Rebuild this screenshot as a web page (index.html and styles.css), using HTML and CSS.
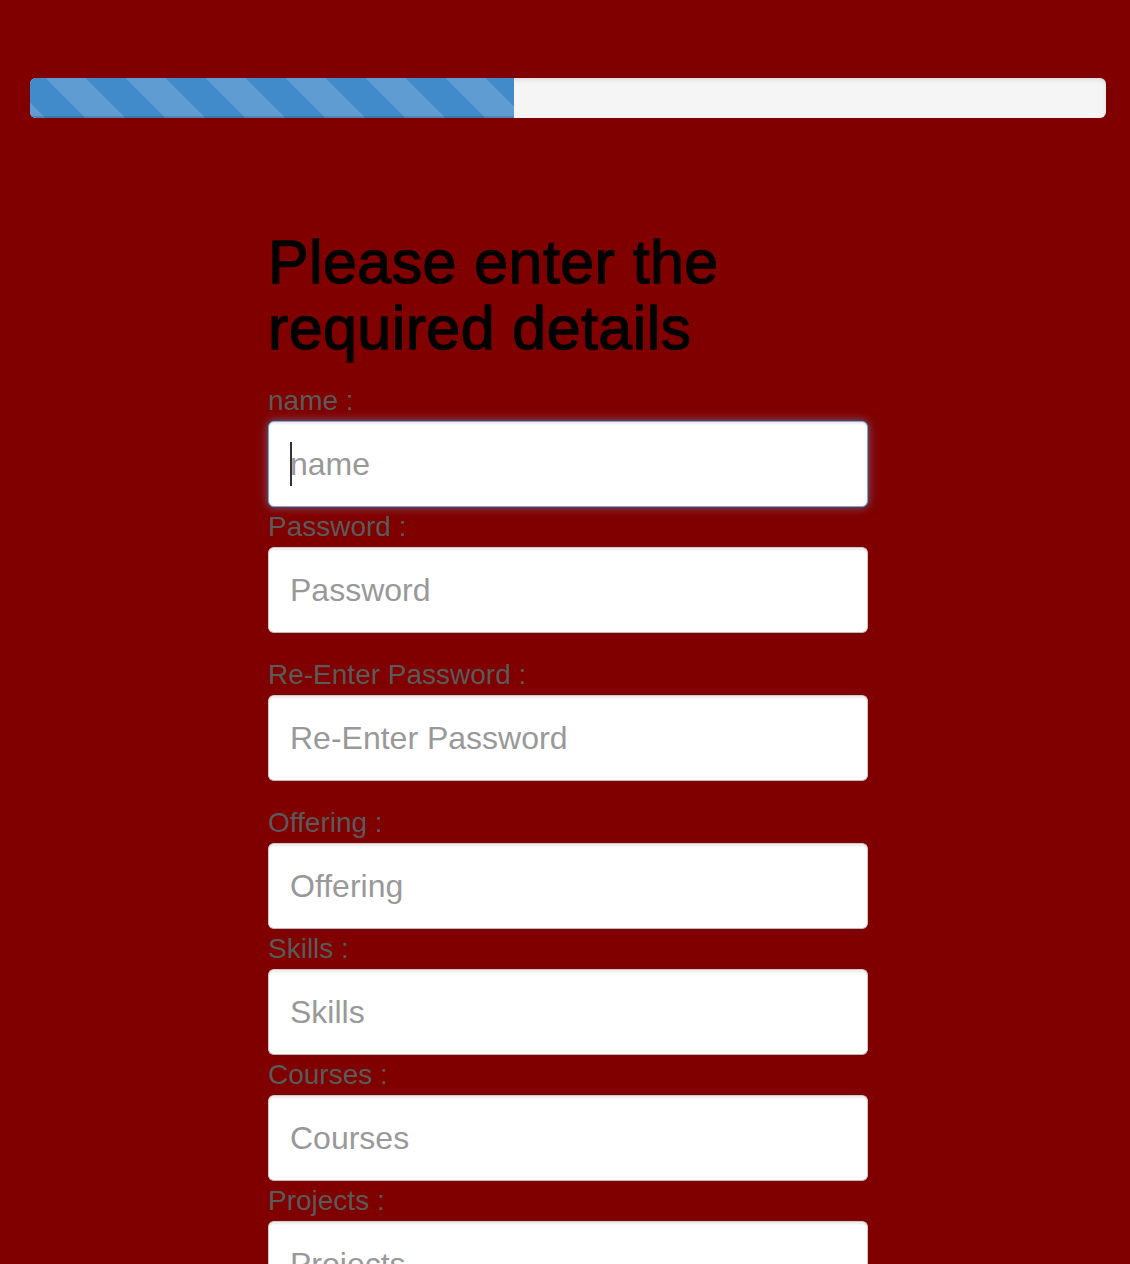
FILE: index.html
```html
<!DOCTYPE html>
<html lang="en">
<head>
<meta charset="utf-8">
<title>Registration</title>
<link rel="stylesheet" href="styles.css">
</head>
<body>
<div class="page">
  <div class="progress">
    <div class="progress-bar" style="width: 45%"></div>
  </div>

  <form class="form">
    <h2 class="title">Please enter the required details</h2>

    <div class="group">
      <label class="label" for="name">name :</label>
      <div class="field">
        <input class="input is-focused" id="name" type="text" placeholder="name">
        <span class="caret"></span>
      </div>
    </div>

    <div class="group group-spaced">
      <label class="label" for="pw">Password :</label>
      <input class="input" id="pw" type="password" placeholder="Password">
    </div>

    <div class="group group-spaced">
      <label class="label" for="pw2">Re-Enter Password :</label>
      <input class="input" id="pw2" type="password" placeholder="Re-Enter Password">
    </div>

    <div class="group">
      <label class="label" for="offering">Offering :</label>
      <input class="input" id="offering" type="text" placeholder="Offering">
    </div>

    <div class="group">
      <label class="label" for="skills">Skills :</label>
      <input class="input" id="skills" type="text" placeholder="Skills">
    </div>

    <div class="group">
      <label class="label" for="courses">Courses :</label>
      <input class="input" id="courses" type="text" placeholder="Courses">
    </div>

    <div class="group">
      <label class="label" for="projects">Projects :</label>
      <input class="input" id="projects" type="text" placeholder="Projects">
    </div>
  </form>
</div>
</body>
</html>
```

FILE: styles.css
```css
html, body {
  margin: 0;
  padding: 0;
  background: #800000;
  font-family: "Liberation Sans", Arial, Helvetica, sans-serif;
}

.page {
  padding: 78px 24px 40px 30px;
}

.progress {
  height: 40px;
  background: #f5f5f5;
  border-radius: 6px;
  overflow: hidden;
  box-shadow: inset 0 2px 4px rgba(0, 0, 0, 0.1);
  display: flex;
}

.progress-bar {
  height: 100%;
  background-color: #428bca;
  background-image: linear-gradient(45deg,
    rgba(255, 255, 255, 0.15) 25%, transparent 25%, transparent 50%,
    rgba(255, 255, 255, 0.15) 50%, rgba(255, 255, 255, 0.15) 75%,
    transparent 75%, transparent);
  background-size: 80px 80px;
  background-position: 16px 0;
  box-shadow: inset 0 -2px 0 rgba(0, 0, 0, 0.15);
}

.form {
  width: 600px;
  margin: 111px auto 0;
}

.title {
  margin: 0 0 20px;
  font-size: 61px;
  line-height: 66px;
  font-weight: 400;
  letter-spacing: 0.4px;
  color: #000;
  -webkit-text-stroke: 1.3px #000;
}

.group {
  display: flex;
  flex-direction: column;
}

.group-spaced {
  margin-bottom: 22px;
}

.label {
  display: block;
  font-size: 28px;
  line-height: 40px;
  color: #5a5a5a;
}

.field {
  position: relative;
}

.input {
  display: block;
  box-sizing: border-box;
  width: 600px;
  height: 86px;
  margin: 0;
  padding: 0 21px;
  font-family: "Liberation Sans", Arial, Helvetica, sans-serif;
  font-size: 32px;
  color: #555;
  background: #fff;
  border: 1px solid #ccc;
  border-bottom-color: #bbb;
  border-radius: 6px;
  box-shadow: inset 0 2px 2px rgba(0, 0, 0, 0.075);
  outline: none;
}

.input::placeholder {
  color: #999;
  opacity: 1;
}

.input.is-focused {
  border-color: #66afe9;
  box-shadow: inset 0 2px 2px rgba(0, 0, 0, 0.075), 0 0 10px rgba(102, 175, 233, 0.6);
}

.caret {
  position: absolute;
  left: 22px;
  top: 21px;
  width: 2px;
  height: 44px;
  background: #333;
}
```
